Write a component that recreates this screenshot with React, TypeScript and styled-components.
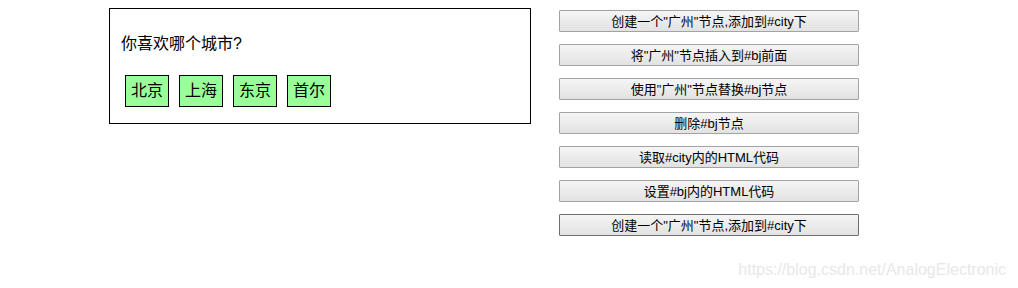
import React from 'react';
import styled, { createGlobalStyle } from 'styled-components';

const GlobalStyle = createGlobalStyle`
  html, body {
    margin: 0;
    padding: 0;
    background: #fff;
  }
  body {
    font-family: "Liberation Sans", "Noto Sans CJK SC", Arial, sans-serif;
    color: #000;
  }
`;

const Page = styled.div`
  position: relative;
  width: 1018px;
  height: 288px;
  display: flex;
  align-items: flex-start;
  gap: 28px;
  padding: 8px 0 0 109px;
  box-sizing: border-box;
`;

const Total = styled.div`
  width: 422px;
  height: 116px;
  border: 1px solid #000;
  padding: 25px 0 0 11px;
  box-sizing: border-box;
`;

const Question = styled.p`
  margin: 0;
  font-size: 16px;
  line-height: 20px;
  height: 20px;
`;

const CityList = styled.ul`
  list-style: none;
  margin: 21px 0 0 4px;
  padding: 0;
  display: flex;
  gap: 10px;
`;

const City = styled.li`
  width: 42px;
  height: 30px;
  border: 1px solid #000;
  background: #99ff99;
  font-size: 16px;
  line-height: 30px;
  text-align: center;
`;

const BtnList = styled.div`
  display: flex;
  flex-direction: column;
  gap: 12px;
  padding-top: 2px;
`;

const Btn = styled.button<{ $focused?: boolean }>`
  width: 300px;
  height: 22px;
  padding: 0 0 1px;
  margin: 0;
  font-family: "Liberation Sans", "Noto Sans CJK SC", Arial, sans-serif;
  font-size: 13px;
  color: #000;
  border: 1px solid ${p => (p.$focused ? '#6e6e6e' : '#a3a3a3')};
  border-radius: 1px;
  background: linear-gradient(#f5f5f5, #e2e2e2);
  cursor: pointer;
`;

const Watermark = styled.span`
  position: absolute;
  right: 12px;
  bottom: 9px;
  font-size: 16px;
  color: #e8e8e8;
  font-family: "Liberation Sans", Arial, sans-serif;
`;

const cities = ['北京', '上海', '东京', '首尔'];

const actions = [
  '创建一个"广州"节点,添加到#city下',
  '将"广州"节点插入到#bj前面',
  '使用"广州"节点替换#bj节点',
  '删除#bj节点',
  '读取#city内的HTML代码',
  '设置#bj内的HTML代码',
  '创建一个"广州"节点,添加到#city下',
];

export default function App() {
  return (
    <>
      <GlobalStyle />
      <Page>
        <Total>
          <Question>你喜欢哪个城市?</Question>
          <CityList id="city">
            {cities.map((c, i) => (
              <City key={c} id={i === 0 ? 'bj' : undefined}>{c}</City>
            ))}
          </CityList>
        </Total>
        <BtnList>
          {actions.map((a, i) => (
            <Btn key={i} $focused={i === actions.length - 1}>{a}</Btn>
          ))}
        </BtnList>
        <Watermark>https://blog.csdn.net/AnalogElectronic</Watermark>
      </Page>
    </>
  );
}
